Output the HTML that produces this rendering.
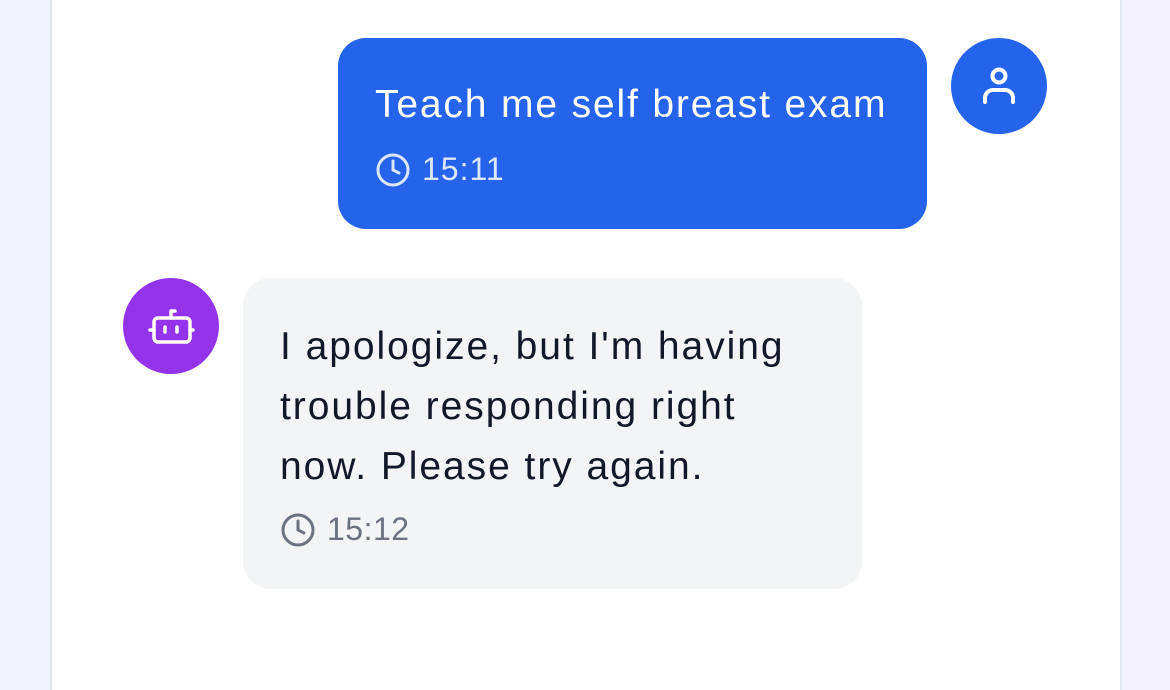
<!DOCTYPE html>
<html><head><style>
body{margin:0;width:1170px;height:669px;overflow:hidden;background:linear-gradient(90deg,#eff4fd,#f4f3fd);font-family:"Liberation Sans",sans-serif;position:relative}
.card{position:absolute;left:50px;top:-10px;width:1068px;height:700px;background:#fff;border-left:2px solid #e3e8f1;border-right:2px solid #e3e8f1}
.av{position:absolute;width:96px;height:96px;border-radius:50%}
.b{position:absolute;border-radius:28px}
.t{position:absolute;white-space:nowrap}
</style></head><body>
<div class="card"></div>
<div class="b" style="left:338px;top:38px;width:589px;height:191px;background:#2563eb"></div>
<div class="t" style="left:375px;top:83px;font-size:39px;letter-spacing:1.85px;color:#fff">Teach me self breast exam</div>
<svg style="position:absolute;left:375px;top:152px" width="36" height="36" viewBox="0 0 24 24" fill="none" stroke="#dbe6fd" stroke-width="2" stroke-linecap="round"><circle cx="12" cy="12" r="10"/><path d="M12 6v6l4 2"/></svg>
<div class="t" style="left:422px;top:151px;font-size:32px;letter-spacing:1px;color:#dbe6fd">15:11</div>
<div class="av" style="left:951px;top:38px;background:#2563eb"></div>
<svg style="position:absolute;left:975px;top:62px" width="48" height="48" viewBox="0 0 48 48" fill="none" stroke="#fff" stroke-width="4" stroke-linecap="round"><circle cx="24" cy="14" r="6.5"/><path d="M10 40v-4a8 8 0 0 1 8-8h12a8 8 0 0 1 8 8v4"/></svg>
<div class="av" style="left:123px;top:278px;background:#9333ea"></div>
<svg style="position:absolute;left:147px;top:302px" width="48" height="48" viewBox="0 0 48 48" fill="none" stroke="#fff" stroke-width="3.5" stroke-linecap="round" stroke-linejoin="round"><rect x="7" y="16" width="36" height="24" rx="4"/><path d="M24 16V9h4M3 28h4M43 28h3M18 25v5M30 25v5"/></svg>
<div class="b" style="left:243px;top:278px;width:619px;height:311px;background:#f3f4f6"></div>
<div class="t" style="left:280px;top:317px;font-size:39px;letter-spacing:1.95px;line-height:60px;color:#111827">I apologize, but I'm having<br>trouble responding right<br>now. Please try again.</div>
<svg style="position:absolute;left:280px;top:512px" width="36" height="36" viewBox="0 0 24 24" fill="none" stroke="#6b7280" stroke-width="2" stroke-linecap="round"><circle cx="12" cy="12" r="10"/><path d="M12 6v6l4 2"/></svg>
<div class="t" style="left:327px;top:511px;font-size:32px;letter-spacing:0.5px;color:#6b7280">15:12</div>
</body></html>
